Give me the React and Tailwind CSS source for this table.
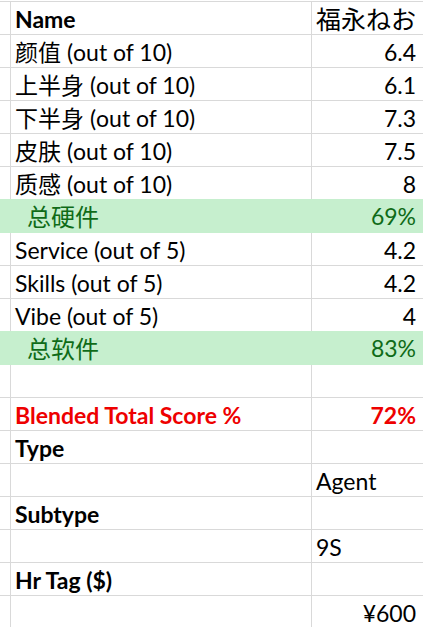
import React from "react";

const rows = [
  { b: "Name", c: "福永ねお", bold: true, jp: true },
  { b: "颜值 (out of 10)", c: "6.4" },
  { b: "上半身 (out of 10)", c: "6.1" },
  { b: "下半身 (out of 10)", c: "7.3" },
  { b: "皮肤 (out of 10)", c: "7.5" },
  { b: "质感 (out of 10)", c: "8" },
  { b: "总硬件", c: "69%", green: true },
  { b: "Service (out of 5)", c: "4.2" },
  { b: "Skills (out of 5)", c: "4.2" },
  { b: "Vibe (out of 5)", c: "4" },
  { b: "总软件", c: "83%", green: true },
  { b: "", c: "" },
  { b: "Blended Total Score %", c: "72%", red: true },
  { b: "Type", c: "", bold: true },
  { b: "", c: "Agent", cAlign: "left" },
  { b: "Subtype", c: "", bold: true },
  { b: "", c: "9S", cAlign: "left" },
  { b: "Hr Tag ($)", c: "", bold: true },
  { b: "", c: "¥600" },
];

export default function App() {
  return (
    <div className="w-[423px] h-[627px] overflow-hidden bg-white font-['Lato','Noto_Sans_CJK_SC',sans-serif] text-[23px] text-black">
      <div className="mt-[1px] border-t border-[#d9d9d9]">
        {rows.map((r, i) => {
          const nextGreen = rows[i + 1] && rows[i + 1].green;
          if (r.green) {
            return (
              <div
                key={i}
                className="flex items-end bg-[#c6efce] text-[#0f6b18] -mt-[1px] h-[34px]"
              >
                <div className="w-[27px] shrink-0" />
                <div className="flex-1 pb-[4px] leading-none text-[24px]">{r.b}</div>
                <div className="pr-[7px] pb-[5px] leading-none">{r.c}</div>
              </div>
            );
          }
          const color = r.red ? "text-[#ee0000] font-bold" : r.bold ? "font-bold" : "";
          return (
            <div
              key={i}
              className={`flex h-[33px] border-b ${nextGreen ? "border-[#c6efce]" : "border-[#d9d9d9]"} ${color}`}
            >
              <div className="w-[11px] shrink-0 border-r border-[#d9d9d9]" />
              <div className="w-[301px] shrink-0 border-r border-[#d9d9d9] flex items-end pl-[4px] pb-[3px] leading-none whitespace-nowrap">
                {r.b}
              </div>
              <div
                className={`flex-1 flex items-end pb-[3px] leading-none whitespace-nowrap ${
                  r.cAlign === "left" ? "justify-start pl-[4px]" : "justify-end pr-[7px]"
                } ${r.jp ? "font-normal font-['Noto_Sans_CJK_JP',sans-serif] text-[25px]" : ""}`}
              >
                {r.c}
              </div>
            </div>
          );
        })}
      </div>
    </div>
  );
}
